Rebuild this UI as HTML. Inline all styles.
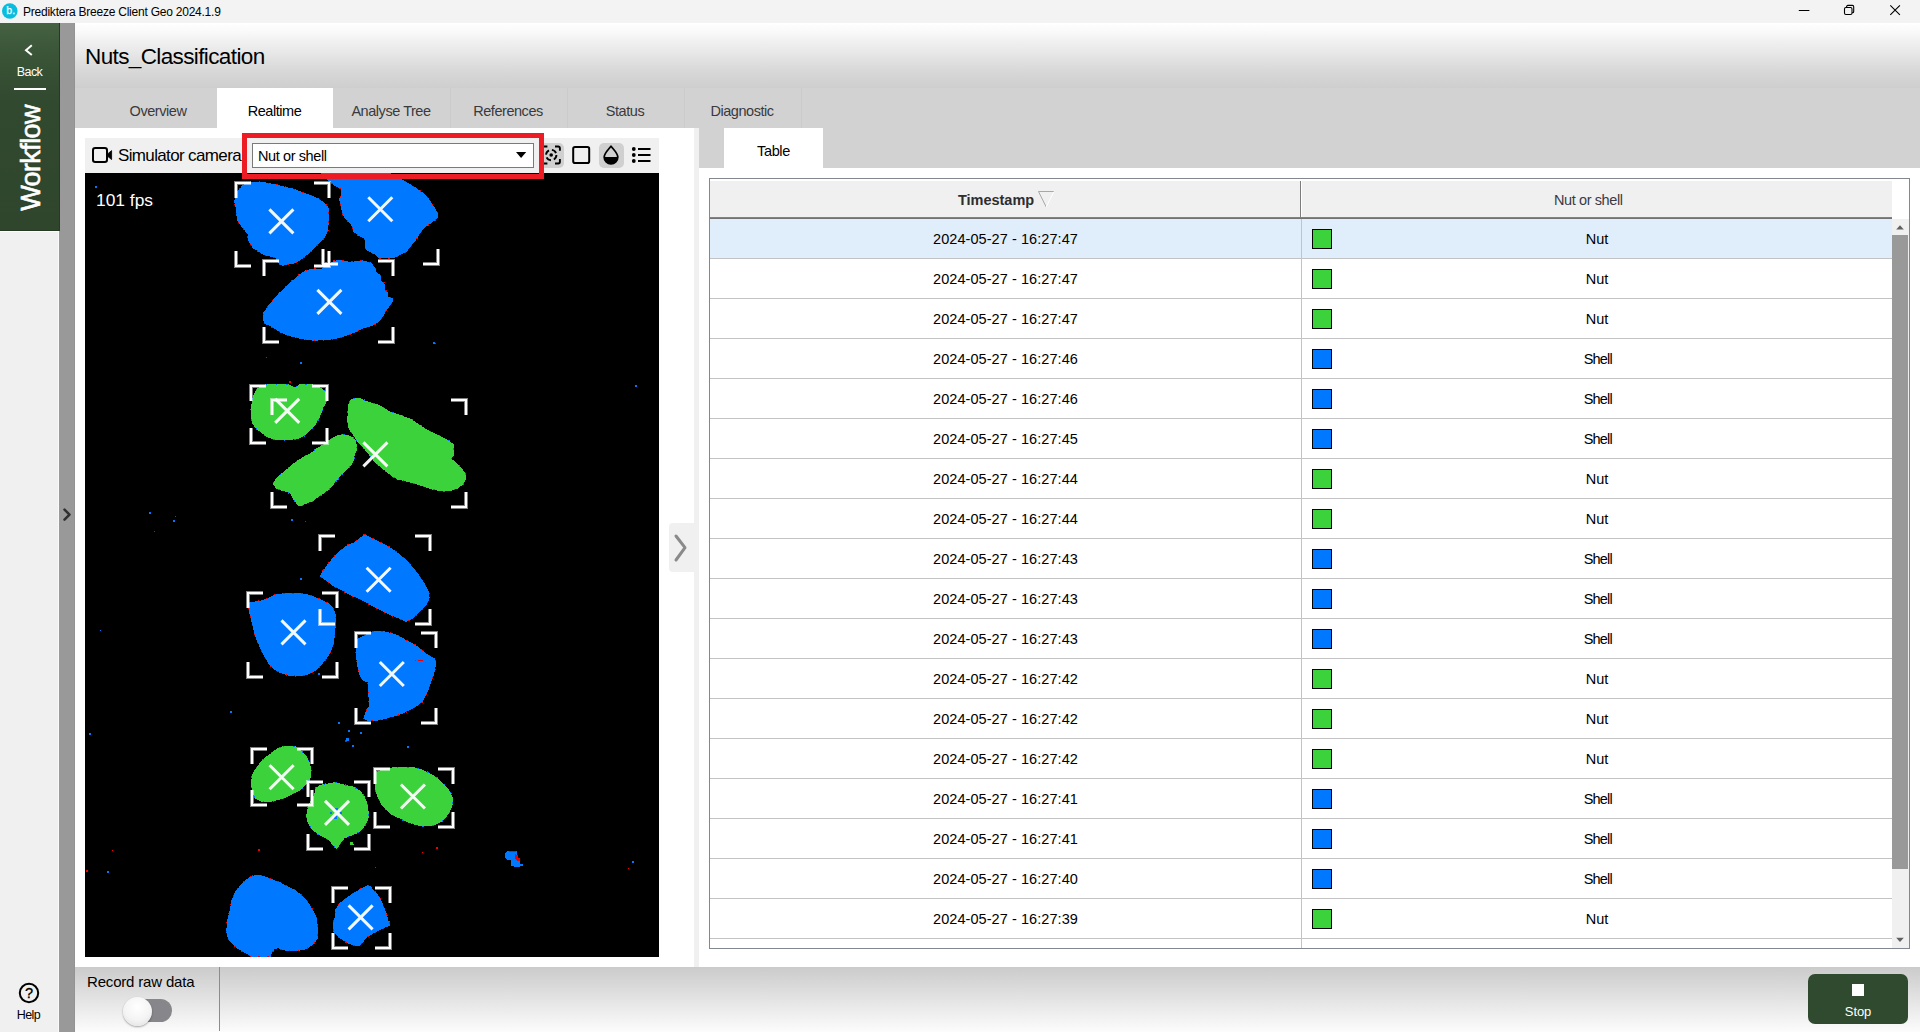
<!DOCTYPE html>
<html lang="en">
<head>
<meta charset="utf-8">
<title>Prediktera Breeze Client Geo 2024.1.9</title>
<style>
*{box-sizing:border-box;margin:0;padding:0}
html,body{width:1920px;height:1032px;overflow:hidden;background:#fff}
body{position:relative;font-family:"Liberation Sans",sans-serif;color:#000;font-size:14.5px}
.abs{position:absolute}
.t{position:absolute;white-space:nowrap;line-height:1}
/* title bar */
#titlebar{left:0;top:0;width:1920px;height:23px;background:#f3f3f3}
/* sidebar */
#side{left:0;top:231px;width:59px;height:801px;background:#f0f0f0;border-right:1px solid #fafafa;border-top:1px solid #fff}
#sidegreen{left:0;top:23px;width:60px;height:208px;background:linear-gradient(#456242 0,#3a5538 30px,#31492f 80px,#2f462d 100%);box-shadow:inset -1px -1px 0 #243b22}
#strip{left:60px;top:23px;width:15px;height:1009px;background:#999;box-shadow:inset -1px 0 0 #939393}
#strip2{left:59px;top:231px;width:1px;height:801px;background:#9b9b9b}
/* header */
#head{left:75px;top:23px;width:1845px;height:65px;background:linear-gradient(#fff 0,#fafafa 12%,#f0f0f0 28.5%,#e8e8e8 45%,#dedede 62%,#d6d6d6 78%,#d0d0d0 95%,#cecece 100%)}
#tabs{left:75px;top:88px;width:1845px;height:40px;background:#d2d2d2}
.tab{position:absolute;top:88px;height:40px;width:117px;padding-right:1px;text-align:center;line-height:46px;font-size:14.5px;letter-spacing:-.45px;color:#3a3a3e}
.tab.on{background:#fff;color:#000}
.tsep{position:absolute;top:88px;width:1px;height:40px;background:#cbcbcb}
/* panels */
#left{left:75px;top:128px;width:619px;height:839px;background:#fff}
#split{left:694px;top:128px;width:5px;height:839px;background:#f0f0f0}
#right{left:699px;top:128px;width:1221px;height:839px;background:#fff}
#rtabs{left:699px;top:128px;width:1221px;height:40px;background:#d2d2d2}
#toolbar{left:85px;top:138px;width:574px;height:35px;background:#f0f0f0}
#cam{left:85px;top:173px;width:574px;height:784px;background:#000}
#bottom{left:75px;top:967px;width:1845px;height:65px;background:linear-gradient(#cbcbcb 0,#fcfcfc 100%)}

#ttl{left:23px;top:6px;font-size:12px;letter-spacing:-.23px;color:#000}
#h1{left:85px;top:45.5px;font-size:22.5px;letter-spacing:-.62px;color:#000}
#back{left:0;top:66px;width:59px;text-align:center;font-size:12.5px;color:#fff;letter-spacing:-.6px}
#wf{left:31.300px;top:158.400px;-webkit-text-stroke:.6px #fff;width:0;height:0;color:#fff;font-size:27px;letter-spacing:-.6px}
#wf span{position:absolute;white-space:nowrap;line-height:1;transform:translate(-50%,-50%) rotate(-90deg);display:block}
#help{left:0;top:1009px;width:57px;text-align:center;font-size:12.5px;color:#000;letter-spacing:-.55px}

#simcam{left:118px;top:146.800px;font-size:17px;letter-spacing:-.64px}
#combo{left:252px;top:143px;width:282px;height:25px;background:#fff;border:1px solid #7a7a7a}
#combotxt{left:258px;top:148.5px;font-size:14.5px;letter-spacing:-.4px}
#redbox{left:242px;top:133px;width:302px;height:46px;border:5px solid #ed1c24}
.tbtn{position:absolute;top:143px;height:25px;background:#d0d0d0;border-radius:5px}
#fps{left:96px;top:192px;font-size:17.4px;color:#fff}
#rtab{left:724px;top:128px;width:99px;height:40px;background:#fff;text-align:center;line-height:46px;font-size:14.5px;letter-spacing:-.35px}
#collapse{left:669px;top:523px;width:25px;height:49px;background:#f0f0f0;border-radius:4px 0 0 4px}

#tbl{left:709px;top:178px;width:1201px;height:771px;border:1px solid #828790;background:#fff}
#thead{left:710px;top:181px;width:1182px;height:36px;background:#f0f0f0}
#theadline{left:710px;top:217px;width:1182px;height:2px;background:linear-gradient(#8a8a8a,#6a6a6a)}
.row{position:absolute;left:710px;width:1182px;height:40px;border-bottom:1px solid #c3c3c3}
.row.sel{background:#e0eefb}
.c1{position:absolute;left:0;top:0;width:591px;height:39px;text-align:center;line-height:41px;font-size:14.5px;letter-spacing:.07px;white-space:nowrap}
.c2{position:absolute;left:592px;top:0;width:590px;height:39px;text-align:center;line-height:41px;font-size:14.5px;letter-spacing:-.1px;white-space:nowrap}
.c2.sh{letter-spacing:-.8px;padding-left:1.5px}
.sw{position:absolute;left:602px;top:10px;width:20px;height:20px;border:1px solid #000}
.g{background:#3cd23c}.b{background:#0078ff}
#colsep{left:1301px;top:219px;width:1px;height:729px;background:#c3c3c3}
#hsep1{left:1300px;top:181px;width:1px;height:37px;background:#7d7d7d}
#hsep2{left:1301px;top:181px;width:1px;height:36px;background:#fff}
#th1{left:958px;top:192.500px;font-size:14.5px;font-weight:bold;color:#2e2e2e;letter-spacing:-.02px}
#th2{left:1554px;top:192.500px;font-size:14.5px;color:#3a3a46;letter-spacing:-.4px}
#sbtrack{left:1892px;top:219px;width:17px;height:729px;background:#f0f0f0}
#sbthumb{left:1892px;top:235px;width:16px;height:634px;background:#999}

#rec{left:87px;top:974px;font-size:15px;letter-spacing:-.18px}
#vsep{left:219px;top:967px;width:1px;height:64px;background:#8c8c8c}
#track{left:125px;top:999px;width:47px;height:23px;border-radius:11.500px;background:#86868b}
#knob{left:123px;top:996.500px;width:29px;height:29px;border-radius:14.500px;background:radial-gradient(circle at 50% 35%,#fff 0,#f4f4f4 55%,#dcdcdc 100%);box-shadow:0 1px 2px rgba(0,0,0,.35)}
#stop{left:1808px;top:974px;width:100px;height:50px;border-radius:7px;background:#2f4a2f}
#stopsq{left:1852px;top:984px;width:12px;height:12px;background:#fff}
#stoptxt{left:1808px;top:1005px;width:100px;text-align:center;font-size:13px;color:#fff;letter-spacing:-.1px}
</style>
</head>
<body>
<div class="abs" id="titlebar"></div>
<div class="abs" id="side"></div>
<div class="abs" id="sidegreen"></div>
<div class="abs" id="strip"></div>
<div class="abs" id="strip2"></div>
<div class="abs" id="head"></div>
<div class="abs" id="tabs"></div>
<div class="abs" id="left"></div>
<div class="abs" id="split"></div>
<div class="abs" id="right"></div>
<div class="abs" id="rtabs"></div>
<div class="abs" id="toolbar"></div>
<div class="abs" id="cam"></div>
<div class="abs" id="bottom"></div>

<!-- title bar -->
<svg class="abs" style="left:0;top:0" width="23" height="23" viewBox="0 0 23 23">
  <circle cx="9.8" cy="11" r="7.8" fill="#08bde0"/>
  <text x="6.300" y="14.300" font-family="Liberation Sans, sans-serif" font-size="10.500" fill="#fff" stroke="#fff" stroke-width=".25">b.</text>
</svg>
<div class="t" id="ttl">Prediktera Breeze Client Geo 2024.1.9</div>
<svg class="abs" style="left:1780px;top:0" width="140" height="23" viewBox="0 0 140 23">
  <path d="M18.8 10.5h10.6" stroke="#000" stroke-width="1" fill="none"/>
  <rect x="64.500" y="7.500" width="7.500" height="7" rx="1.400" stroke="#000" stroke-width="1.100" fill="none"/>
  <path d="M66.600 7.400V6.700a1.300 1.300 0 0 1 1.300-1.300h4.500a1.300 1.300 0 0 1 1.300 1.300v4.700a1.300 1.300 0 0 1-1.300 1.300h-.4" stroke="#000" stroke-width="1.100" fill="none"/>
  <path d="M110.300 5.300l9.600 9.600M119.900 5.300l-9.600 9.600" stroke="#000" stroke-width="1.100" fill="none"/>
</svg>
<!-- sidebar -->
<svg class="abs" style="left:0;top:23px" width="60" height="80" viewBox="0 0 60 80">
  <path d="M31.8 22.3 26 27.2l5.8 4.9" stroke="#fff" stroke-width="2" fill="none" stroke-linecap="butt" stroke-linejoin="miter"/>
  <rect x="14" y="65" width="32" height="2" fill="#fff"/>
</svg>
<div class="t" id="back">Back</div>
<div class="abs" id="wf"><span>Workflow</span></div>
<svg class="abs" style="left:60px;top:505px" width="15" height="20" viewBox="0 0 15 20">
  <path d="M4.500 4.600l5 5-5 5" stroke="#303030" stroke-width="2.500" fill="none" stroke-linecap="round" stroke-linejoin="round"/>
</svg>
<svg class="abs" style="left:15px;top:980px" width="28" height="28" viewBox="0 0 28 28">
  <circle cx="14" cy="13" r="9.200" stroke="#000" stroke-width="2" fill="none"/>
  <text x="14" y="18.300" text-anchor="middle" font-family="Liberation Sans, sans-serif" font-size="14.500" fill="#000" stroke="#000" stroke-width=".3">?</text>
</svg>
<div class="t" id="help">Help</div>
<!-- header -->
<div class="t" id="h1">Nuts_Classification</div>
<div class="tab" style="left:100px">Overview</div>
<div class="tab on" style="left:217px;width:116px">Realtime</div>
<div class="tab" style="left:333px">Analyse Tree</div>
<div class="tab" style="left:450px">References</div>
<div class="tab" style="left:567px">Status</div>
<div class="tab" style="left:684px">Diagnostic</div>
<div class="tsep" style="left:450px"></div>
<div class="tsep" style="left:567px"></div>
<div class="tsep" style="left:684px"></div>
<div class="tsep" style="left:801px"></div>

<!-- toolbar -->
<svg class="abs" style="left:88px;top:143px" width="28" height="25" viewBox="0 0 28 25">
  <rect x="5" y="5" width="14" height="14" rx="2.2" stroke="#000" stroke-width="2" fill="none"/>
  <path d="M19.3 11.2 23.6 7.6V16.6L19.3 13z" fill="#000" stroke="#000" stroke-width=".8" stroke-linejoin="round"/>
</svg>
<div class="t" id="simcam">Simulator camera</div>
<div class="tbtn" style="left:540px;width:24px"></div>
<svg class="abs" style="left:540px;top:143px" width="24" height="25" viewBox="0 0 24 25">
  <g stroke="#000" stroke-width="1.900" fill="none">
    <path d="M2.5 7.8V5.2a1.7 1.7 0 0 1 1.7-1.7H7.4M15 3.5h3.2a1.7 1.7 0 0 1 1.7 1.7v2.6M19.9 16v2.8a1.7 1.7 0 0 1-1.7 1.7H15M7.4 20.500H4.200a1.700 1.700 0 0 1-1.700-1.700V16"/>
    <circle cx="11.2" cy="12" r="5.200" stroke-dasharray="5.2 3"/>
  </g>
  <circle cx="11.2" cy="12" r="1.800" fill="#000"/>
</svg>
<svg class="abs" style="left:568px;top:143px" width="26" height="25" viewBox="0 0 26 25">
  <rect x="5.200" y="4" width="16" height="16" rx="1.800" stroke="#000" stroke-width="2" fill="none"/>
</svg>
<div class="tbtn" style="left:599px;width:25px"></div>
<svg class="abs" style="left:599px;top:143px" width="25" height="25" viewBox="0 0 25 25">
  <path d="M12 3.200C9.500 6.500 5.200 10.200 5.200 14a6.800 6.800 0 0 0 13.600 0C18.800 10.200 14.500 6.500 12 3.200z" stroke="#000" stroke-width="1.800" fill="none" stroke-linejoin="round"/>
  <path d="M5.200 14a6.800 6.800 0 0 0 13.600 0z" fill="#000"/>
</svg>
<svg class="abs" style="left:629px;top:143px" width="25" height="25" viewBox="0 0 25 25">
  <g fill="#000">
    <circle cx="4.800" cy="6" r="1.900"/><circle cx="4.800" cy="12" r="1.900"/><circle cx="4.800" cy="18" r="1.900"/>
    <rect x="9" y="5" width="12.500" height="2"/><rect x="9" y="11" width="12.500" height="2"/><rect x="9" y="17" width="12.500" height="2"/>
  </g>
</svg>
<div class="abs" id="combo"></div>
<div class="t" id="combotxt">Nut or shell</div>
<svg class="abs" style="left:514px;top:150px" width="14" height="10" viewBox="0 0 14 10"><path d="M2 2h10.200L7.100 8z" fill="#000"/></svg>
<!--CAM0-->
<svg class="abs" style="left:85px;top:173px" width="574" height="784" viewBox="85 173 574 784">
<rect x="85" y="173" width="574" height="784" fill="#000"/>
<g shape-rendering="crispEdges">
<path d="M249.6,182.0 261.6,181.7 272.9,183.9 293.1,188.6 310.7,195.2 318.3,198.3 324.6,202.8 328.6,207.8 329.0,217.9 328.1,230.5 324.6,238.0 317.0,245.6 310.7,251.9 303.1,258.2 295.6,263.2 283.0,265.7 279.2,264.5 275.4,258.2 262.8,254.4 252.8,248.1 248.3,240.6 247.7,234.3 241.4,226.7 237.0,220.4 235.7,207.8 234.1,201.5 237.0,191.4 242.7,185.1z" fill="#0078ff" stroke="#f00000" stroke-width="1" stroke-dasharray="1.500 7.500"/>
<path d="M320.8,170.0 320.8,173.0 327.1,180.1 330.9,182.6 333.4,185.1 340.9,188.9 340.9,195.2 339.1,199.0 340.9,207.8 342.8,215.4 346.0,219.8 351.0,224.2 353.5,231.7 358.6,236.1 364.9,238.7 364.9,246.9 366.8,250.6 375.0,254.4 378.7,258.2 393.9,258.2 398.9,255.7 406.5,251.9 411.5,245.6 416.5,239.3 420.3,233.0 424.1,228.0 431.7,222.9 438.0,217.9 438.0,213.5 434.2,206.5 429.1,199.0 422.8,192.7 414.0,186.4 405.2,181.3 401.4,178.8 390.1,173.0 390.1,170.0z" fill="#0078ff" stroke="#f00000" stroke-width="1" stroke-dasharray="1.500 7.500"/>
<path d="M333.4,260.7 340.9,260.1 351.0,262.0 362.4,260.3 371.2,262.6 375.0,267.6 376.2,272.0 380.6,275.2 381.3,280.9 384.4,282.8 385.0,290.3 387.6,291.6 388.2,296.6 392.9,297.9 392.9,301.7 390.1,305.4 386.3,310.5 383.8,315.5 380.0,320.6 376.2,323.7 371.2,326.2 362.4,328.7 353.5,333.1 346.0,335.7 338.4,338.2 327.1,340.1 313.2,340.7 303.1,339.4 295.6,337.6 288.0,335.7 280.5,332.5 274.2,328.7 270.4,326.2 264.1,323.7 262.8,318.7 263.1,313.0 266.6,308.0 270.4,302.9 274.2,298.5 279.2,292.8 284.3,287.8 289.3,282.8 294.3,279.0 298.1,275.2 305.7,270.2 313.2,268.6 322.0,268.6 329.6,265.1z" fill="#0078ff" stroke="#f00000" stroke-width="1" stroke-dasharray="1.500 7.500"/>
<path d="M265.2,384.4 287.9,384.1 295.4,387.6 299.2,384.1 313.1,384.4 320.6,387.6 325.7,391.4 326.9,397.7 325.7,404.0 323.1,407.8 320.6,415.3 318.1,420.4 314.3,426.7 310.6,430.4 305.5,435.5 299.2,438.6 290.4,439.9 277.8,440.5 267.7,437.4 261.4,433.0 255.1,427.9 252.0,422.9 250.7,416.6 250.7,409.0 252.0,400.2 253.9,393.9 256.4,388.9z" fill="#3cd23c" stroke="#0078ff" stroke-width="1" stroke-dasharray="1.500 9"/>
<path d="M353.4,398.3 360.9,398.3 366.0,400.8 373.5,403.3 379.8,405.2 388.7,410.9 393.7,412.8 401.3,415.3 411.3,419.1 418.9,424.1 426.5,429.2 432.8,432.3 441.6,436.7 449.1,440.5 453.5,444.3 454.2,454.4 451.7,458.8 456.7,463.2 461.7,468.2 465.5,473.3 465.5,479.6 463.0,484.6 458.0,488.4 451.7,490.7 441.6,491.5 432.8,489.6 426.5,487.8 418.9,485.2 408.8,482.1 397.5,479.6 391.2,475.8 384.9,470.7 378.6,465.7 373.5,460.7 368.5,454.4 363.5,448.1 358.4,443.0 355.9,439.3 353.4,435.5 349.6,430.4 347.7,425.4 347.3,417.8 348.1,410.3 348.3,404.0 350.2,400.2z" fill="#3cd23c" stroke="#0078ff" stroke-width="1" stroke-dasharray="1.500 9"/>
<path d="M343.3,434.2 350.9,436.1 355.3,439.3 356.5,444.3 356.5,450.6 354.6,455.6 353.4,461.9 350.9,465.7 347.1,469.5 343.3,473.3 339.5,477.0 337.0,480.8 340.8,476.3 337.0,480.1 333.2,485.1 328.2,490.2 323.1,493.9 318.1,497.1 313.1,500.9 305.5,504.0 299.2,506.5 296.7,504.0 292.9,499.0 290.4,493.9 286.6,492.0 281.6,490.8 276.5,488.9 272.8,483.9 275.3,479.6 281.6,473.3 287.9,468.2 295.4,461.9 303.0,456.9 310.6,453.1 316.9,448.1 324.4,443.7 330.7,438.6 337.0,435.5z" fill="#3cd23c" stroke="#0078ff" stroke-width="1" stroke-dasharray="1.500 9"/>
<path d="M364.1,534.1 372.3,538.2 379.8,542.0 388.7,546.4 396.2,551.5 402.5,556.5 408.8,562.2 413.9,568.5 418.9,574.8 422.7,580.4 426.5,586.7 429.0,591.8 429.6,598.1 427.7,603.1 423.9,608.1 417.6,614.4 411.3,619.5 406.3,622.0 400.0,618.9 389.9,615.1 382.4,611.3 373.5,606.9 366.0,602.5 357.2,598.1 348.3,594.3 340.8,589.9 333.2,586.1 326.9,581.1 320.0,576.7 321.9,572.2 326.9,565.3 330.7,560.3 335.7,554.6 340.8,550.2 347.1,545.2 353.4,542.6 359.7,538.2z" fill="#0078ff" stroke="#f00000" stroke-width="1" stroke-dasharray="1.500 7.500"/>
<path d="M248.8,602.5 260.8,600.6 269.0,597.4 275.9,594.3 286.6,593.0 296.7,593.0 306.8,594.0 313.1,596.2 320.6,599.3 328.2,603.1 333.2,608.1 335.7,614.4 336.0,622.6 335.1,632.7 333.9,642.8 332.0,649.1 328.2,656.6 323.1,662.9 318.1,668.6 313.1,672.4 305.5,675.5 296.7,676.1 287.9,675.5 279.1,672.4 272.8,668.6 268.3,663.5 265.2,657.9 262.0,651.6 258.9,645.3 255.7,637.7 253.2,628.9 251.3,621.3 248.8,610.6z" fill="#0078ff" stroke="#f00000" stroke-width="1" stroke-dasharray="1.500 7.500"/>
<path d="M355.9,639.6 362.2,636.5 368.5,633.3 373.5,631.4 384.9,631.4 392.4,633.3 397.5,635.2 402.5,637.7 407.6,640.9 413.9,644.0 418.9,647.2 425.2,652.8 430.2,656.0 435.3,658.5 435.9,665.4 434.6,671.7 432.8,678.0 430.2,684.3 428.3,690.6 425.2,696.9 422.7,702.0 418.9,704.5 413.9,708.3 405.0,712.7 396.2,715.8 384.9,719.0 376.1,720.9 367.2,720.9 363.5,718.3 366.0,710.8 368.5,707.0 368.5,696.9 367.9,685.6 367.9,682.4 363.5,681.2 359.7,675.5 357.8,669.2 356.5,660.4 355.9,651.6 355.3,646.5z" fill="#0078ff" stroke="#f00000" stroke-width="1" stroke-dasharray="1.500 7.500"/>
<path d="M282.8,746.3 295.4,746.3 301.7,751.4 306.8,756.4 309.9,762.7 311.2,770.3 310.6,777.8 306.8,784.1 301.7,789.2 295.4,793.0 287.9,796.7 279.1,799.9 270.2,801.8 261.4,801.8 255.1,798.6 252.0,791.7 251.1,782.9 252.0,775.3 254.5,770.3 258.9,764.0 263.9,758.3 270.2,753.9 276.5,748.9z" fill="#3cd23c" stroke="#0078ff" stroke-width="1" stroke-dasharray="1.500 9"/>
<path d="M335.1,782.2 344.6,784.8 353.4,786.7 359.7,790.4 364.1,795.5 367.2,803.0 368.5,810.6 368.5,818.1 366.0,824.4 362.2,829.5 357.2,833.3 350.9,835.8 344.6,838.3 340.8,843.3 337.0,849.0 333.2,845.9 329.4,840.8 325.7,838.3 318.1,834.5 311.8,829.5 308.0,823.2 306.1,816.9 308.0,805.6 311.8,799.3 314.3,794.2 315.6,787.9 320.6,784.8 328.2,783.5z" fill="#3cd23c" stroke="#0078ff" stroke-width="1" stroke-dasharray="1.500 9"/>
<path d="M376.1,771.5 384.9,769.0 392.4,767.5 403.8,767.1 415.1,767.5 422.7,769.6 430.2,773.4 436.5,777.2 441.6,781.6 446.6,786.7 450.4,791.7 452.9,798.0 452.9,804.3 450.4,810.6 446.6,816.9 441.6,821.9 435.3,825.1 429.0,826.3 421.4,826.3 413.9,824.4 406.3,821.9 398.7,818.1 391.2,814.4 386.1,810.0 381.1,804.3 378.0,798.0 375.4,790.4 374.6,782.9 374.8,776.6z" fill="#3cd23c" stroke="#0078ff" stroke-width="1" stroke-dasharray="1.500 9"/>
<path d="M251.7,875.8 259.2,874.9 265.5,876.5 273.1,879.6 280.6,882.5 288.2,886.5 295.7,890.3 302.0,895.4 307.1,900.4 310.9,906.7 314.0,911.7 316.5,918.0 317.8,925.6 317.8,938.2 314.6,943.2 309.6,947.0 304.6,949.5 298.3,950.8 285.7,950.8 278.1,948.3 274.3,949.5 271.8,953.3 270.6,956.8 251.7,956.8 245.4,953.3 237.8,948.9 231.5,943.2 227.7,938.2 226.2,931.9 227.1,920.6 229.6,910.5 231.5,900.4 235.3,891.6 240.3,885.3 245.4,880.2z" fill="#0078ff" stroke="#f00000" stroke-width="1" stroke-dasharray="1.500 7.500"/>
<path d="M367.6,885.3 370.7,886.5 373.9,890.3 377.6,894.1 381.4,900.4 383.9,906.7 386.5,913.0 388.3,920.6 390.0,921.8 389.6,925.6 382.7,928.7 375.1,932.5 367.6,936.9 363.1,942.0 358.7,946.4 356.2,946.4 348.7,943.9 342.4,940.1 337.3,936.3 333.5,931.9 332.9,924.3 334.8,916.8 335.4,909.2 339.8,902.9 346.1,897.9 352.4,893.5 360.0,889.1z" fill="#0078ff" stroke="#f00000" stroke-width="1" stroke-dasharray="1.500 7.500"/>
<path d="M507.5,851.0 517.0,851.0 517.0,856.0 520.0,860.0 520.0,864.0 523.0,864.0 523.0,866.0 516.0,867.0 511.0,866.0 511.0,860.0 507.0,860.0 505.0,858.0 505.0,854.0z" fill="#0078ff"/>
<path d="M509.0,851.0 516.0,851.0 516.0,852.0 509.0,852.0z" fill="#f00000"/>
<path d="M514.5,854.0 517.5,855.0 518.0,858.0 520.0,858.0 520.0,861.0 517.0,861.0 516.0,859.0 514.5,858.0z" fill="#f00000"/>
<path d="M349.5,842.0 353.0,842.0 354.0,845.0 349.5,845.0z" fill="#3cd23c"/>
<rect x="95" y="186" width="2" height="2" fill="#0078ff"/>
<rect x="433" y="342" width="2" height="2" fill="#0078ff"/>
<rect x="435" y="343" width="1" height="1" fill="#f00000"/>
<rect x="266" y="357" width="1" height="1" fill="#f00000"/>
<rect x="300" y="362" width="2" height="2" fill="#0078ff"/>
<rect x="635" y="385" width="2" height="2" fill="#0078ff"/>
<rect x="149" y="512" width="2" height="2" fill="#0078ff"/>
<rect x="175" y="516" width="1" height="1" fill="#f00000"/>
<rect x="173" y="520" width="2" height="2" fill="#0078ff"/>
<rect x="154" y="531" width="1" height="1" fill="#f00000"/>
<rect x="291" y="519" width="2" height="2" fill="#0078ff"/>
<rect x="305" y="521" width="1" height="1" fill="#f00000"/>
<rect x="289" y="381" width="2" height="2" fill="#f00000"/>
<rect x="300" y="578" width="2" height="2" fill="#0078ff"/>
<rect x="100" y="630" width="1" height="1" fill="#0078ff"/>
<rect x="230" y="711" width="2" height="2" fill="#0078ff"/>
<rect x="338" y="722" width="2" height="2" fill="#0078ff"/>
<rect x="360" y="732" width="2" height="2" fill="#0078ff"/>
<rect x="89" y="733" width="2" height="2" fill="#0078ff"/>
<rect x="318" y="673" width="2" height="2" fill="#0078ff"/>
<rect x="348" y="730" width="2" height="2" fill="#0078ff"/>
<rect x="345" y="740" width="2" height="2" fill="#f00000"/>
<rect x="346" y="738" width="3" height="3" fill="#0078ff"/>
<rect x="352" y="745" width="2" height="2" fill="#0078ff"/>
<rect x="407" y="746" width="2" height="2" fill="#0078ff"/>
<rect x="112" y="850" width="1" height="1" fill="#f00000"/>
<rect x="258" y="849" width="2" height="2" fill="#f00000"/>
<rect x="86" y="870" width="2" height="2" fill="#f00000"/>
<rect x="107" y="871" width="2" height="2" fill="#0078ff"/>
<rect x="375" y="867" width="1" height="1" fill="#f00000"/>
<rect x="422" y="852" width="1" height="1" fill="#f00000"/>
<rect x="436" y="847" width="2" height="2" fill="#f00000"/>
<rect x="632" y="861" width="2" height="2" fill="#0078ff"/>
<rect x="628" y="868" width="1" height="1" fill="#f00000"/>
<rect x="335" y="808" width="3" height="3" fill="#0078ff"/>
<rect x="334" y="816" width="3" height="3" fill="#0078ff"/>
<rect x="330" y="812" width="2" height="2" fill="#0078ff"/>
<rect x="340" y="812" width="2" height="2" fill="#0078ff"/>
<rect x="415" y="660" width="1" height="1" fill="#f00000"/>
<rect x="418" y="660" width="5" height="1" fill="#f00000"/>
</g>
<path d="M236.0,198.0V183.0H251.0M314.0,183.0H329.0V198.0M329.0,251.0V266.0H314.0M251.0,266.0H236.0V251.0M323.0,173.0V158.0H338.0M423.0,158.0H438.0V173.0M438.0,249.0V264.0H423.0M338.0,264.0H323.0V249.0M264.0,276.0V261.0H279.0M378.0,261.0H393.0V276.0M393.0,327.0V342.0H378.0M279.0,342.0H264.0V327.0M251.0,401.0V386.0H266.0M312.0,386.0H327.0V401.0M327.0,428.0V443.0H312.0M266.0,443.0H251.0V428.0M272.0,415.0V400.0H287.0M451.0,400.0H466.0V415.0M466.0,492.0V507.0H451.0M287.0,507.0H272.0V492.0M320.0,551.0V536.0H335.0M415.0,536.0H430.0V551.0M430.0,609.0V624.0H415.0M335.0,624.0H320.0V609.0M248.0,608.0V593.0H263.0M322.0,593.0H337.0V608.0M337.0,662.0V677.0H322.0M263.0,677.0H248.0V662.0M356.0,648.0V633.0H371.0M421.0,633.0H436.0V648.0M436.0,708.0V723.0H421.0M371.0,723.0H356.0V708.0M252.0,764.0V749.0H267.0M297.0,749.0H312.0V764.0M312.0,790.0V805.0H297.0M267.0,805.0H252.0V790.0M308.0,797.0V782.0H323.0M354.0,782.0H369.0V797.0M369.0,834.0V849.0H354.0M323.0,849.0H308.0V834.0M375.0,784.0V769.0H390.0M438.0,769.0H453.0V784.0M453.0,812.0V827.0H438.0M390.0,827.0H375.0V812.0M333.0,903.0V888.0H348.0M375.0,888.0H390.0V903.0M390.0,933.0V948.0H375.0M348.0,948.0H333.0V933.0" fill="none" stroke="#fff" stroke-opacity=".5" stroke-width="4" stroke-linejoin="miter" shape-rendering="crispEdges"/>
<path d="M236.0,198.0V183.0H251.0M314.0,183.0H329.0V198.0M329.0,251.0V266.0H314.0M251.0,266.0H236.0V251.0M323.0,173.0V158.0H338.0M423.0,158.0H438.0V173.0M438.0,249.0V264.0H423.0M338.0,264.0H323.0V249.0M264.0,276.0V261.0H279.0M378.0,261.0H393.0V276.0M393.0,327.0V342.0H378.0M279.0,342.0H264.0V327.0M251.0,401.0V386.0H266.0M312.0,386.0H327.0V401.0M327.0,428.0V443.0H312.0M266.0,443.0H251.0V428.0M272.0,415.0V400.0H287.0M451.0,400.0H466.0V415.0M466.0,492.0V507.0H451.0M287.0,507.0H272.0V492.0M320.0,551.0V536.0H335.0M415.0,536.0H430.0V551.0M430.0,609.0V624.0H415.0M335.0,624.0H320.0V609.0M248.0,608.0V593.0H263.0M322.0,593.0H337.0V608.0M337.0,662.0V677.0H322.0M263.0,677.0H248.0V662.0M356.0,648.0V633.0H371.0M421.0,633.0H436.0V648.0M436.0,708.0V723.0H421.0M371.0,723.0H356.0V708.0M252.0,764.0V749.0H267.0M297.0,749.0H312.0V764.0M312.0,790.0V805.0H297.0M267.0,805.0H252.0V790.0M308.0,797.0V782.0H323.0M354.0,782.0H369.0V797.0M369.0,834.0V849.0H354.0M323.0,849.0H308.0V834.0M375.0,784.0V769.0H390.0M438.0,769.0H453.0V784.0M453.0,812.0V827.0H438.0M390.0,827.0H375.0V812.0M333.0,903.0V888.0H348.0M375.0,888.0H390.0V903.0M390.0,933.0V948.0H375.0M348.0,948.0H333.0V933.0" fill="none" stroke="#fff" stroke-width="2" stroke-linejoin="miter" shape-rendering="crispEdges"/>
<path d="M269.4,209.4L293.4,233.4M293.4,209.4L269.4,233.4M368.3,197.3L392.3,221.3M392.3,197.3L368.3,221.3M317.4,289.9L341.4,313.9M341.4,289.9L317.4,313.9M275.2,398.9L299.2,422.9M299.2,398.9L275.2,422.9M363.4,442.4L387.4,466.4M387.4,442.4L363.4,466.4M366.6,567.8L390.6,591.8M390.6,567.8L366.6,591.8M281.5,620.4L305.5,644.4M305.5,620.4L281.5,644.4M379.8,662.0L403.8,686.0M403.8,662.0L379.8,686.0M269.6,765.2L293.6,789.2M293.6,765.2L269.6,789.2M325.0,800.9L349.0,824.9M349.0,800.9L325.0,824.9M400.9,784.5L424.9,808.5M424.9,784.5L400.9,808.5M348.6,905.4L372.6,929.4M372.6,905.4L348.6,929.4" fill="none" stroke="#fff" stroke-width="3" stroke-linecap="butt" opacity=".95"/>
</svg>
<!--CAM1-->
<div class="abs" id="redbox"></div>
<div class="t" id="fps">101 fps</div>
<!-- collapse button -->
<div class="abs" id="collapse"></div>
<svg class="abs" style="left:669px;top:523px" width="25" height="49" viewBox="0 0 25 49">
  <path d="M7 13l9 11.700L7 37" stroke="#8a8a8a" stroke-width="3" fill="none" stroke-linecap="round" stroke-linejoin="round"/>
</svg>
<!-- right tab -->
<div class="abs" id="rtab">Table</div>
<!-- table -->
<div class="abs" id="tbl"></div>
<div class="abs" id="thead"></div>
<div class="abs" id="theadline"></div>
<div class="abs" id="hsep1"></div><div class="abs" id="hsep2"></div>
<div class="t" id="th1">Timestamp</div>
<div class="t" id="th2">Nut or shell</div>
<svg class="abs" style="left:1036px;top:189px" width="20" height="20" viewBox="0 0 20 20"><path d="M2.500 2.500h15.500L10.200 18z" fill="#f0f0f0"/><path d="M18 2.500H2.500L10.200 18" stroke="#a8a8a8" stroke-width="1" fill="none"/><path d="M10.200 18 18 2.500" stroke="#fff" stroke-width="1" fill="none"/></svg>
<div class="row sel" style="top:219px"><div class="c1">2024-05-27 - 16:27:47</div><div class="sw g"></div><div class="c2">Nut</div></div>
<div class="row" style="top:259px"><div class="c1">2024-05-27 - 16:27:47</div><div class="sw g"></div><div class="c2">Nut</div></div>
<div class="row" style="top:299px"><div class="c1">2024-05-27 - 16:27:47</div><div class="sw g"></div><div class="c2">Nut</div></div>
<div class="row" style="top:339px"><div class="c1">2024-05-27 - 16:27:46</div><div class="sw b"></div><div class="c2 sh">Shell</div></div>
<div class="row" style="top:379px"><div class="c1">2024-05-27 - 16:27:46</div><div class="sw b"></div><div class="c2 sh">Shell</div></div>
<div class="row" style="top:419px"><div class="c1">2024-05-27 - 16:27:45</div><div class="sw b"></div><div class="c2 sh">Shell</div></div>
<div class="row" style="top:459px"><div class="c1">2024-05-27 - 16:27:44</div><div class="sw g"></div><div class="c2">Nut</div></div>
<div class="row" style="top:499px"><div class="c1">2024-05-27 - 16:27:44</div><div class="sw g"></div><div class="c2">Nut</div></div>
<div class="row" style="top:539px"><div class="c1">2024-05-27 - 16:27:43</div><div class="sw b"></div><div class="c2 sh">Shell</div></div>
<div class="row" style="top:579px"><div class="c1">2024-05-27 - 16:27:43</div><div class="sw b"></div><div class="c2 sh">Shell</div></div>
<div class="row" style="top:619px"><div class="c1">2024-05-27 - 16:27:43</div><div class="sw b"></div><div class="c2 sh">Shell</div></div>
<div class="row" style="top:659px"><div class="c1">2024-05-27 - 16:27:42</div><div class="sw g"></div><div class="c2">Nut</div></div>
<div class="row" style="top:699px"><div class="c1">2024-05-27 - 16:27:42</div><div class="sw g"></div><div class="c2">Nut</div></div>
<div class="row" style="top:739px"><div class="c1">2024-05-27 - 16:27:42</div><div class="sw g"></div><div class="c2">Nut</div></div>
<div class="row" style="top:779px"><div class="c1">2024-05-27 - 16:27:41</div><div class="sw b"></div><div class="c2 sh">Shell</div></div>
<div class="row" style="top:819px"><div class="c1">2024-05-27 - 16:27:41</div><div class="sw b"></div><div class="c2 sh">Shell</div></div>
<div class="row" style="top:859px"><div class="c1">2024-05-27 - 16:27:40</div><div class="sw b"></div><div class="c2 sh">Shell</div></div>
<div class="row" style="top:899px"><div class="c1">2024-05-27 - 16:27:39</div><div class="sw g"></div><div class="c2">Nut</div></div>
<div class="abs" id="colsep"></div>
<div class="abs" id="sbtrack"></div><div class="abs" id="sbthumb"></div>
<svg class="abs" style="left:1892px;top:219px" width="16" height="16" viewBox="0 0 16 16"><path d="M4.200 10.500 8 6.200l3.800 4.300z" fill="#606060"/></svg>
<svg class="abs" style="left:1892px;top:932px" width="16" height="16" viewBox="0 0 16 16"><path d="M4.200 5.800 8 10l3.800-4.200z" fill="#606060"/></svg>

<!-- bottom bar -->
<div class="t" id="rec">Record raw data</div>
<div class="abs" id="track"></div>
<div class="abs" id="knob"></div>
<div class="abs" id="vsep"></div>
<div class="abs" id="stop"></div>
<div class="abs" id="stopsq"></div>
<div class="t" id="stoptxt">Stop</div>


</body>
</html>
